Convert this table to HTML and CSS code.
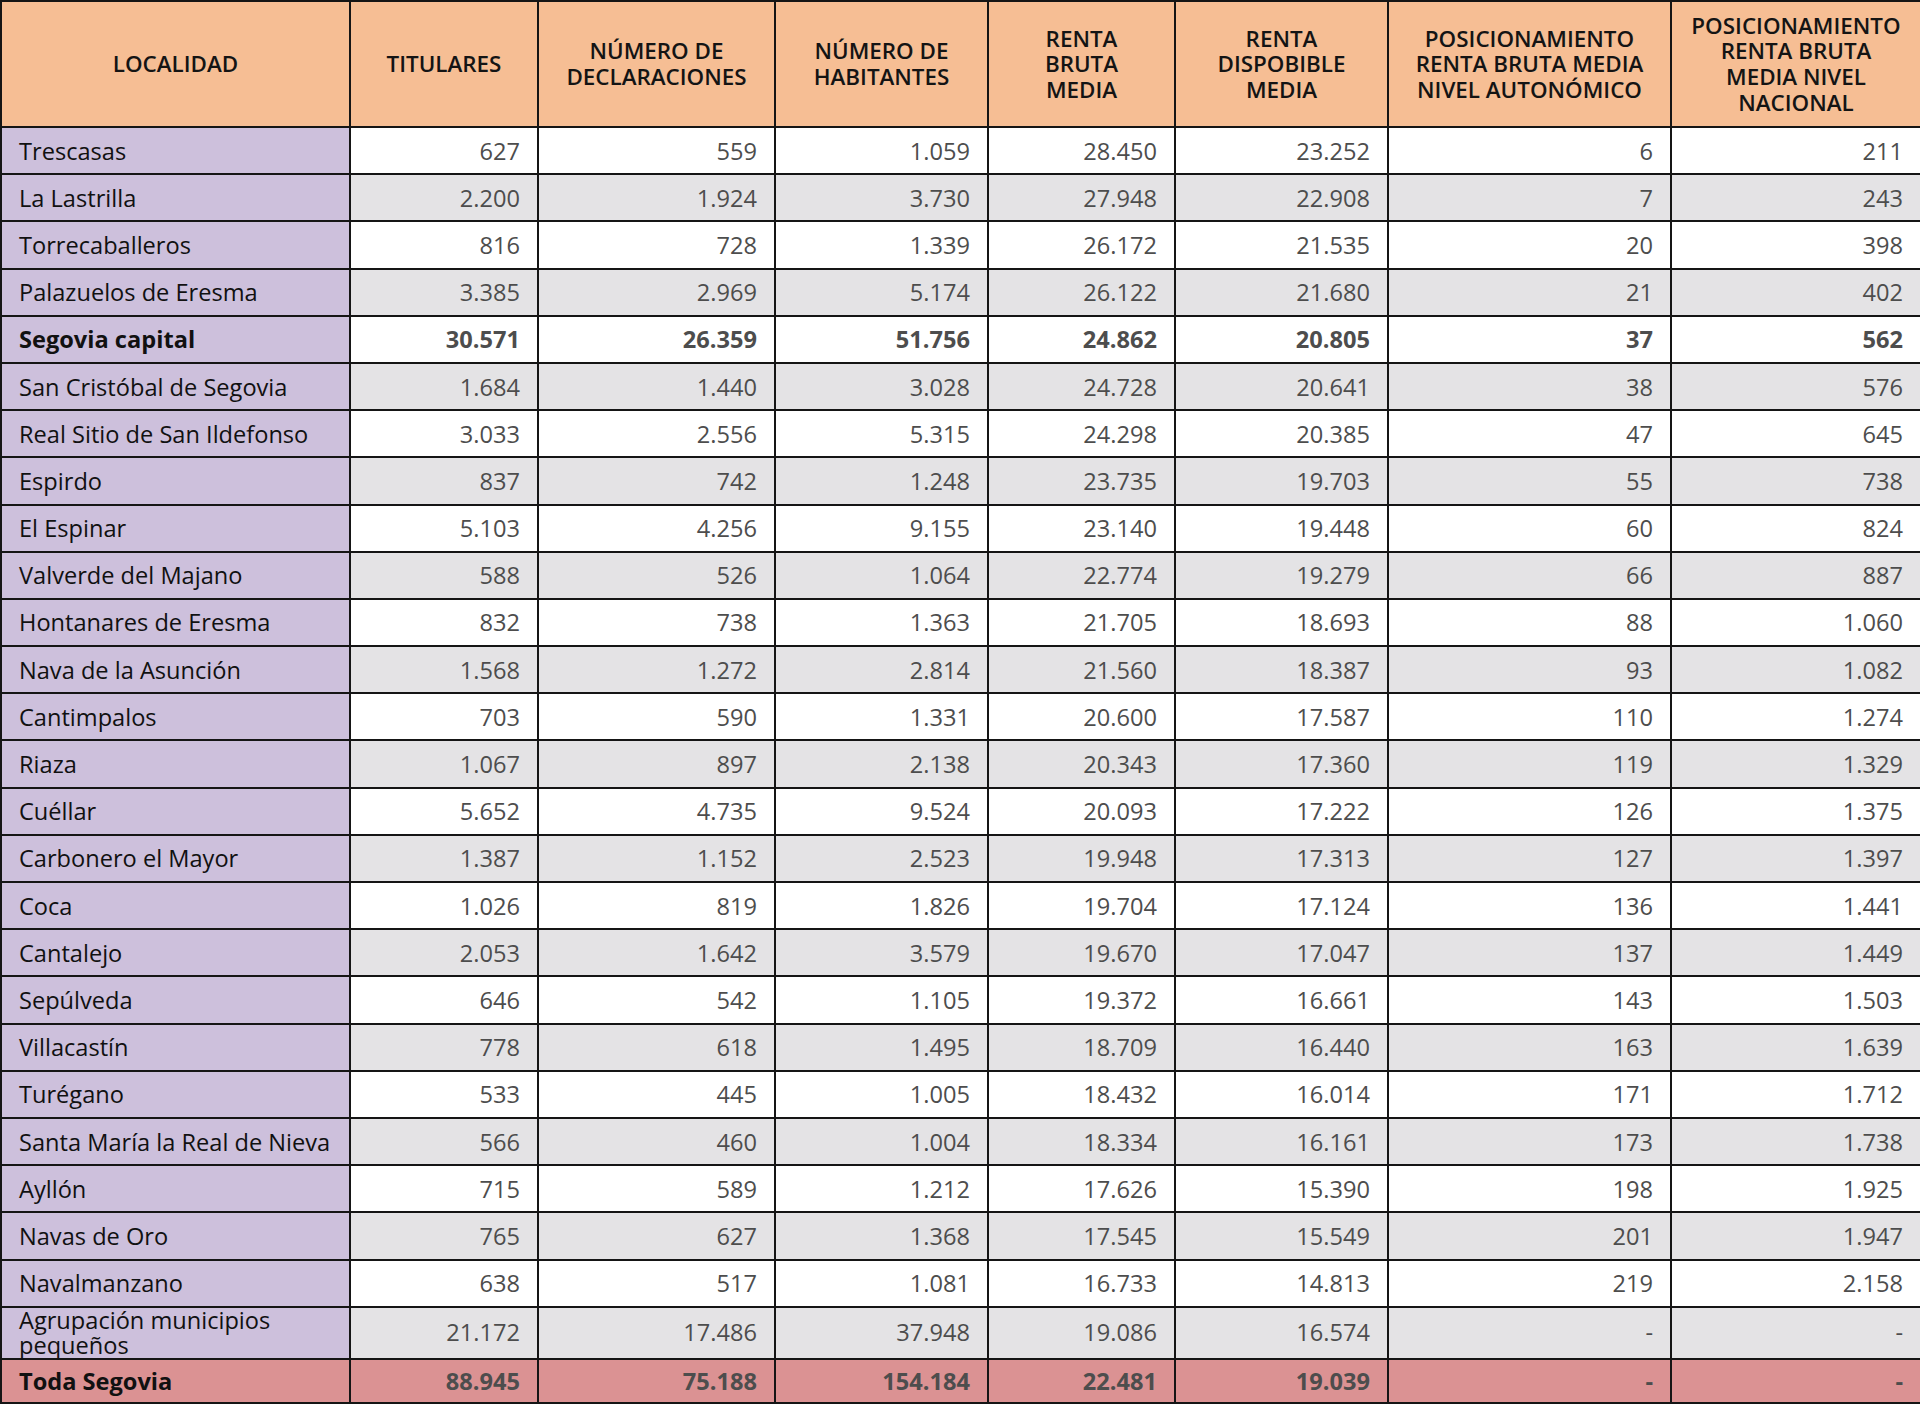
FILE: index.html
```html
<!DOCTYPE html>
<html lang="es">
<head>
<meta charset="utf-8">
<title>Renta Segovia</title>
<link rel="stylesheet" href="styles.css">
</head>
<body>
<table class="renta">
  <colgroup>
    <col class="c-loc"><col class="c-tit"><col class="c-dec"><col class="c-hab"><col class="c-rbm"><col class="c-rdm"><col class="c-aut"><col class="c-nac">
  </colgroup>
  <thead>
    <tr>
      <th>LOCALIDAD</th>
      <th>TITULARES</th>
      <th>NÚMERO DE<br>DECLARACIONES</th>
      <th>NÚMERO DE<br>HABITANTES</th>
      <th>RENTA<br>BRUTA<br>MEDIA</th>
      <th>RENTA<br>DISPOBIBLE<br>MEDIA</th>
      <th>POSICIONAMIENTO<br>RENTA BRUTA MEDIA<br>NIVEL AUTONÓMICO</th>
      <th>POSICIONAMIENTO<br>RENTA BRUTA<br>MEDIA NIVEL<br>NACIONAL</th>
    </tr>
  </thead>
  <tbody>
    <tr><td>Trescasas</td><td>627</td><td>559</td><td>1.059</td><td>28.450</td><td>23.252</td><td>6</td><td>211</td></tr>
    <tr><td>La Lastrilla</td><td>2.200</td><td>1.924</td><td>3.730</td><td>27.948</td><td>22.908</td><td>7</td><td>243</td></tr>
    <tr><td>Torrecaballeros</td><td>816</td><td>728</td><td>1.339</td><td>26.172</td><td>21.535</td><td>20</td><td>398</td></tr>
    <tr><td>Palazuelos de Eresma</td><td>3.385</td><td>2.969</td><td>5.174</td><td>26.122</td><td>21.680</td><td>21</td><td>402</td></tr>
    <tr class="strong"><td>Segovia capital</td><td>30.571</td><td>26.359</td><td>51.756</td><td>24.862</td><td>20.805</td><td>37</td><td>562</td></tr>
    <tr><td>San Cristóbal de Segovia</td><td>1.684</td><td>1.440</td><td>3.028</td><td>24.728</td><td>20.641</td><td>38</td><td>576</td></tr>
    <tr><td>Real Sitio de San Ildefonso</td><td>3.033</td><td>2.556</td><td>5.315</td><td>24.298</td><td>20.385</td><td>47</td><td>645</td></tr>
    <tr><td>Espirdo</td><td>837</td><td>742</td><td>1.248</td><td>23.735</td><td>19.703</td><td>55</td><td>738</td></tr>
    <tr><td>El Espinar</td><td>5.103</td><td>4.256</td><td>9.155</td><td>23.140</td><td>19.448</td><td>60</td><td>824</td></tr>
    <tr><td>Valverde del Majano</td><td>588</td><td>526</td><td>1.064</td><td>22.774</td><td>19.279</td><td>66</td><td>887</td></tr>
    <tr><td>Hontanares de Eresma</td><td>832</td><td>738</td><td>1.363</td><td>21.705</td><td>18.693</td><td>88</td><td>1.060</td></tr>
    <tr><td>Nava de la Asunción</td><td>1.568</td><td>1.272</td><td>2.814</td><td>21.560</td><td>18.387</td><td>93</td><td>1.082</td></tr>
    <tr><td>Cantimpalos</td><td>703</td><td>590</td><td>1.331</td><td>20.600</td><td>17.587</td><td>110</td><td>1.274</td></tr>
    <tr><td>Riaza</td><td>1.067</td><td>897</td><td>2.138</td><td>20.343</td><td>17.360</td><td>119</td><td>1.329</td></tr>
    <tr><td>Cuéllar</td><td>5.652</td><td>4.735</td><td>9.524</td><td>20.093</td><td>17.222</td><td>126</td><td>1.375</td></tr>
    <tr><td>Carbonero el Mayor</td><td>1.387</td><td>1.152</td><td>2.523</td><td>19.948</td><td>17.313</td><td>127</td><td>1.397</td></tr>
    <tr><td>Coca</td><td>1.026</td><td>819</td><td>1.826</td><td>19.704</td><td>17.124</td><td>136</td><td>1.441</td></tr>
    <tr><td>Cantalejo</td><td>2.053</td><td>1.642</td><td>3.579</td><td>19.670</td><td>17.047</td><td>137</td><td>1.449</td></tr>
    <tr><td>Sepúlveda</td><td>646</td><td>542</td><td>1.105</td><td>19.372</td><td>16.661</td><td>143</td><td>1.503</td></tr>
    <tr><td>Villacastín</td><td>778</td><td>618</td><td>1.495</td><td>18.709</td><td>16.440</td><td>163</td><td>1.639</td></tr>
    <tr><td>Turégano</td><td>533</td><td>445</td><td>1.005</td><td>18.432</td><td>16.014</td><td>171</td><td>1.712</td></tr>
    <tr><td>Santa María la Real de Nieva</td><td>566</td><td>460</td><td>1.004</td><td>18.334</td><td>16.161</td><td>173</td><td>1.738</td></tr>
    <tr><td>Ayllón</td><td>715</td><td>589</td><td>1.212</td><td>17.626</td><td>15.390</td><td>198</td><td>1.925</td></tr>
    <tr><td>Navas de Oro</td><td>765</td><td>627</td><td>1.368</td><td>17.545</td><td>15.549</td><td>201</td><td>1.947</td></tr>
    <tr><td>Navalmanzano</td><td>638</td><td>517</td><td>1.081</td><td>16.733</td><td>14.813</td><td>219</td><td>2.158</td></tr>
    <tr class="tall"><td>Agrupación municipios<br>pequeños</td><td>21.172</td><td>17.486</td><td>37.948</td><td>19.086</td><td>16.574</td><td>-</td><td>-</td></tr>
  </tbody>
  <tfoot>
    <tr class="total"><td>Toda Segovia</td><td>88.945</td><td>75.188</td><td>154.184</td><td>22.481</td><td>19.039</td><td>-</td><td>-</td></tr>
  </tfoot>
</table>
</body>
</html>
```
FILE: styles.css
```css
html, body {
  margin: 0;
  padding: 0;
  background: #ffffff;
}

.renta {
  width: 1920px;
  border-collapse: collapse;
  table-layout: fixed;
  font-family: "Open Sans", "Liberation Sans", sans-serif;
  font-size: 23.6px;
  color: #4d4d4d;
}

.c-loc { width: 349px; }
.c-tit { width: 188px; }
.c-dec { width: 237px; }
.c-hab { width: 213px; }
.c-rbm { width: 187px; }
.c-rdm { width: 213px; }
.c-aut { width: 283px; }
.c-nac { width: 250px; }

.renta th,
.renta td {
  border: 2px solid #151515;
  padding: 0 17px;
  vertical-align: middle;
}

.renta th {
  height: 124px;
  background: #f6be94;
  color: #141414;
  font-weight: 600;
  font-size: 22.4px;
  line-height: 25.6px;
  text-align: center;
  padding: 0 4px;
}

.renta tbody tr {
  height: 47.2px;
}

.renta tbody tr:nth-child(even) td {
  background: #e4e3e5;
}

.renta tbody tr:nth-child(odd) td {
  background: #ffffff;
}

.renta td {
  text-align: right;
  line-height: 26px;
  white-space: nowrap;
}

.renta td:first-child,
.renta tbody tr td:first-child {
  text-align: left;
  background: #cdc0dc;
  color: #111111;
  padding-left: 17px;
  padding-right: 4px;
}

.renta .strong td {
  font-weight: 700;
}

.renta tbody .tall {
  height: 50px;
}

.renta .tall td {
  line-height: 25px;
}

.renta .total {
  height: 44px;
}

.renta .total td,
.renta .total td:first-child {
  background: #db9293;
  font-weight: 700;
}
```
